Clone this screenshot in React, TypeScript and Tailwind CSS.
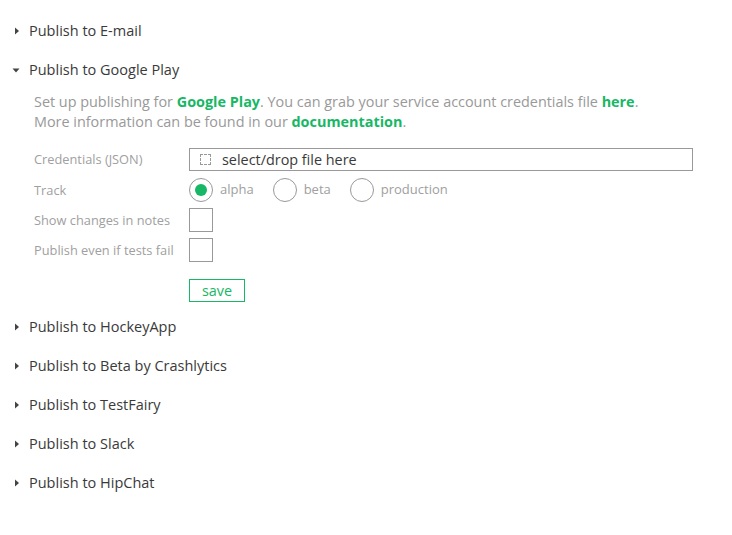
import React from "react";

const font = { fontFamily: '"Open Sans", "Liberation Sans", sans-serif' };

function Right() {
  return (
    <svg width="10" height="10" viewBox="0 0 10 10" className="mr-[8px] ml-[11px]">
      <polygon points="4,1.5 8,5 4,8.5" fill="#444" />
    </svg>
  );
}
function Down() {
  return (
    <svg width="10" height="10" viewBox="0 0 10 10" className="mr-[8px] ml-[11px]">
      <polygon points="1.5,3.5 8.5,3.5 5,7.5" fill="#444" />
    </svg>
  );
}

function Header({ title, open }: { title: string; open?: boolean }) {
  return (
    <div className="h-[39px] flex items-center text-[14.5px] text-[#3a3a3a]">
      {open ? <Down /> : <Right />}
      <span>{title}</span>
    </div>
  );
}

function Radio({ label, checked }: { label: string; checked?: boolean }) {
  return (
    <div className="flex items-center">
      <span className="w-[24px] h-[24px] rounded-full border border-[#999] flex items-center justify-center">
        {checked && <span className="w-[12px] h-[12px] rounded-full bg-[#17b765]" />}
      </span>
      <span className="ml-[7px] text-[13px] text-[#a0a0a0]">{label}</span>
    </div>
  );
}

export default function App() {
  return (
    <div style={font} className="w-[732px] h-[535px] bg-white pt-[11px]">
      <Header title="Publish to E-mail" />
      <Header title="Publish to Google Play" open />
      <div className="pl-[34px] pr-[30px]">
        <div className="mt-[3px] text-[14.4px] leading-[20px] text-[#999]">
          <div>
            Set up publishing for <b className="text-[#17b765]">Google Play</b>. You can grab your service account credentials file <b className="text-[#17b765]">here</b>.
          </div>
          <div>
            More information can be found in our <b className="text-[#17b765]">documentation</b>.
          </div>
        </div>
        <div className="mt-[16px] flex items-center h-[23px]">
          <div className="w-[155px] pt-[1px] text-[12.8px] text-[#a0a0a0]">Credentials (JSON)</div>
          <div className="w-[504px] h-[23px] border border-[#999] flex items-center pl-[10px]">
            <span className="w-[11px] h-[11px] border border-dashed border-[#999]" />
            <span className="ml-[11px] text-[14.4px] text-[#3a3a3a]">select/drop file here</span>
          </div>
        </div>
        <div className="mt-[7px] flex items-center h-[24px]">
          <div className="w-[155px] pt-[1px] text-[12.8px] text-[#a0a0a0]">Track</div>
          <div className="flex items-center gap-[19px]">
            <Radio label="alpha" checked />
            <Radio label="beta" />
            <Radio label="production" />
          </div>
        </div>
        <div className="mt-[6px] flex items-center h-[24px]">
          <div className="w-[155px] pt-[1px] text-[12.8px] text-[#a0a0a0]">Show changes in notes</div>
          <span className="w-[24px] h-[24px] border border-[#999]" />
        </div>
        <div className="mt-[6px] flex items-center h-[24px]">
          <div className="w-[155px] pt-[1px] text-[12.8px] text-[#a0a0a0]">Publish even if tests fail</div>
          <span className="w-[24px] h-[24px] border border-[#999]" />
        </div>
        <div className="mt-[17px] ml-[155px] w-[56px] h-[23px] border border-[#17b765] text-[#17b765] text-[14.4px] flex items-center justify-center">
          save
        </div>
      </div>
      <div className="mt-[5px]">
        <Header title="Publish to HockeyApp" />
        <Header title="Publish to Beta by Crashlytics" />
        <Header title="Publish to TestFairy" />
        <Header title="Publish to Slack" />
        <Header title="Publish to HipChat" />
      </div>
    </div>
  );
}
